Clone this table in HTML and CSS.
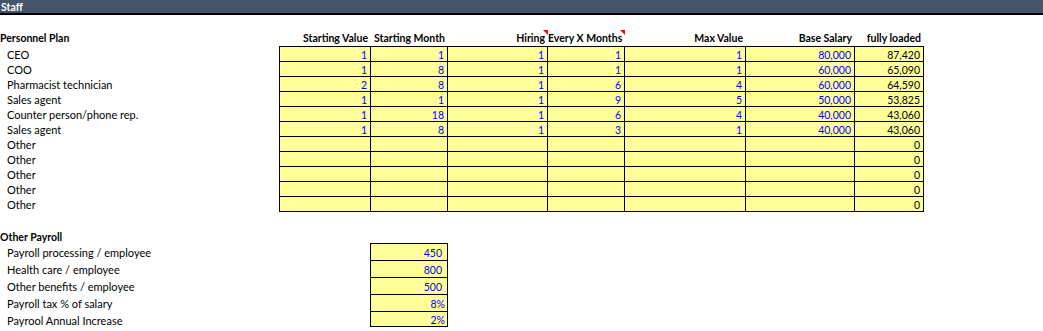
FILE: index.html
```html
<!DOCTYPE html>
<html>
<head>
<meta charset="utf-8">
<link rel="stylesheet" href="styles.css">
</head>
<body>
<div class="titlebar">Staff</div>

<section class="plan">
  <div class="labels">
    <div class="lbl head">Personnel Plan</div>
    <div class="lbl">CEO</div>
    <div class="lbl">COO</div>
    <div class="lbl">Pharmacist technician</div>
    <div class="lbl">Sales agent</div>
    <div class="lbl">Counter person/phone rep.</div>
    <div class="lbl">Sales agent</div>
    <div class="lbl">Other</div>
    <div class="lbl">Other</div>
    <div class="lbl">Other</div>
    <div class="lbl">Other</div>
    <div class="lbl">Other</div>
  </div>
  <div class="tablewrap">
    <div class="hdr cols">
      <div class="h">Starting Value</div>
      <div class="h">Starting Month</div>
      <div class="h note">Hiring</div>
      <div class="h note">Every X Months</div>
      <div class="h">Max Value</div>
      <div class="h">Base Salary</div>
      <div class="h">fully loaded</div>
    </div>
    <div class="grid cols">
      <div class="c in">1</div><div class="c in">1</div><div class="c in">1</div><div class="c in">1</div><div class="c in">1</div><div class="c in">80,000</div><div class="c out">87,420</div>
      <div class="c in">1</div><div class="c in">8</div><div class="c in">1</div><div class="c in">1</div><div class="c in">1</div><div class="c in">60,000</div><div class="c out">65,090</div>
      <div class="c in">2</div><div class="c in">8</div><div class="c in">1</div><div class="c in">6</div><div class="c in">4</div><div class="c in">60,000</div><div class="c out">64,590</div>
      <div class="c in">1</div><div class="c in">1</div><div class="c in">1</div><div class="c in">9</div><div class="c in">5</div><div class="c in">50,000</div><div class="c out">53,825</div>
      <div class="c in">1</div><div class="c in">18</div><div class="c in">1</div><div class="c in">6</div><div class="c in">4</div><div class="c in">40,000</div><div class="c out">43,060</div>
      <div class="c in">1</div><div class="c in">8</div><div class="c in">1</div><div class="c in">3</div><div class="c in">1</div><div class="c in">40,000</div><div class="c out">43,060</div>
      <div class="c"></div><div class="c"></div><div class="c"></div><div class="c"></div><div class="c"></div><div class="c"></div><div class="c out">0</div>
      <div class="c"></div><div class="c"></div><div class="c"></div><div class="c"></div><div class="c"></div><div class="c"></div><div class="c out">0</div>
      <div class="c"></div><div class="c"></div><div class="c"></div><div class="c"></div><div class="c"></div><div class="c"></div><div class="c out">0</div>
      <div class="c"></div><div class="c"></div><div class="c"></div><div class="c"></div><div class="c"></div><div class="c"></div><div class="c out">0</div>
      <div class="c"></div><div class="c"></div><div class="c"></div><div class="c"></div><div class="c"></div><div class="c"></div><div class="c out">0</div>
    </div>
  </div>
</section>

<section class="payroll">
  <div class="plabels">
    <div class="plbl head">Other Payroll</div>
    <div class="plbl">Payroll processing / employee</div>
    <div class="plbl">Health care / employee</div>
    <div class="plbl">Other benefits / employee</div>
    <div class="plbl">Payroll tax % of salary</div>
    <div class="plbl last">Payrool Annual Increase</div>
  </div>
  <div class="pbox">
    <div class="pc num">450</div>
    <div class="pc num">800</div>
    <div class="pc num">500</div>
    <div class="pc pct">8%</div>
    <div class="pc pct last">2%</div>
  </div>
</section>
</body>
</html>
```

FILE: styles.css
```css
html, body {
  margin: 0;
  padding: 0;
  background: #ffffff;
}
* { box-sizing: border-box; }
body {
  font-family: Lato, "Open Sans", Arial, sans-serif;
  font-size: 11px;
  color: #000000;
  width: 1043px;
  height: 331px;
  overflow: hidden;
}

.titlebar {
  height: 15px;
  line-height: 14px;
  background: #44546a;
  border-bottom: 2px solid #000000;
  color: #ffffff;
  font-weight: bold;
  font-size: 10.5px;
  padding-left: 1px;
}

/* Personnel plan */
.plan {
  display: flex;
  margin-top: 15px;
}
.labels {
  width: 279px;
  flex: none;
}
.lbl {
  height: 15px;
  line-height: 15px;
  padding-top: 1px;
  padding-left: 7px;
  white-space: nowrap;
}
.lbl.head {
  height: 16px;
  line-height: 16px;
  padding-top: 0;
  padding-left: 0;
  font-weight: bold;
  font-size: 10.5px;
}

.cols {
  display: grid;
  grid-template-columns: 90px 76px 99px 76px 120px 108px 68px;
  column-gap: 1px;
}
.hdr {
  height: 16px;
  padding: 0 1px;
}
.h {
  position: relative;
  text-align: right;
  font-weight: bold;
  font-size: 10.5px;
  line-height: 16px;
  padding-right: 2px;
  white-space: nowrap;
}
.h.note::after {
  content: "";
  position: absolute;
  top: 0;
  right: -1px;
  width: 0;
  height: 0;
  border-top: 5px solid #ff0000;
  border-left: 5px solid transparent;
}
.grid {
  background: #000000;
  padding: 1px;
  row-gap: 1px;
  width: max-content;
}
.c {
  background: #ffff99;
  height: 14px;
  line-height: 14px;
  padding-top: 1px;
  text-align: right;
  padding-right: 3px;
  font-size: 10.5px;
}
.c.in { color: #0000ff; }
.c.out { color: #000000; }

/* Other payroll */
.payroll {
  display: flex;
  margin-top: 16px;
}
.plabels {
  width: 370px;
  flex: none;
}
.plbl {
  height: 17px;
  line-height: 17px;
  padding-top: 1px;
  padding-left: 7px;
  white-space: nowrap;
}
.plbl.head {
  height: 15px;
  line-height: 15px;
  padding-top: 2px;
  padding-left: 0;
  font-weight: bold;
  font-size: 10.5px;
}
.pbox {
  margin-top: 15px;
  width: 78px;
  height: 84px;
  background: #000000;
  padding: 1px;
  display: flex;
  flex-direction: column;
  gap: 1px;
}
.pc {
  background: #ffff99;
  height: 16px;
  line-height: 16px;
  padding-top: 1px;
  text-align: right;
  color: #0000ff;
  font-size: 10.5px;
  flex: none;
}
.pc.last { height: 14px; line-height: 14px; }
.pc.num { padding-right: 5px; }
.pc.pct { padding-right: 2px; }
```
